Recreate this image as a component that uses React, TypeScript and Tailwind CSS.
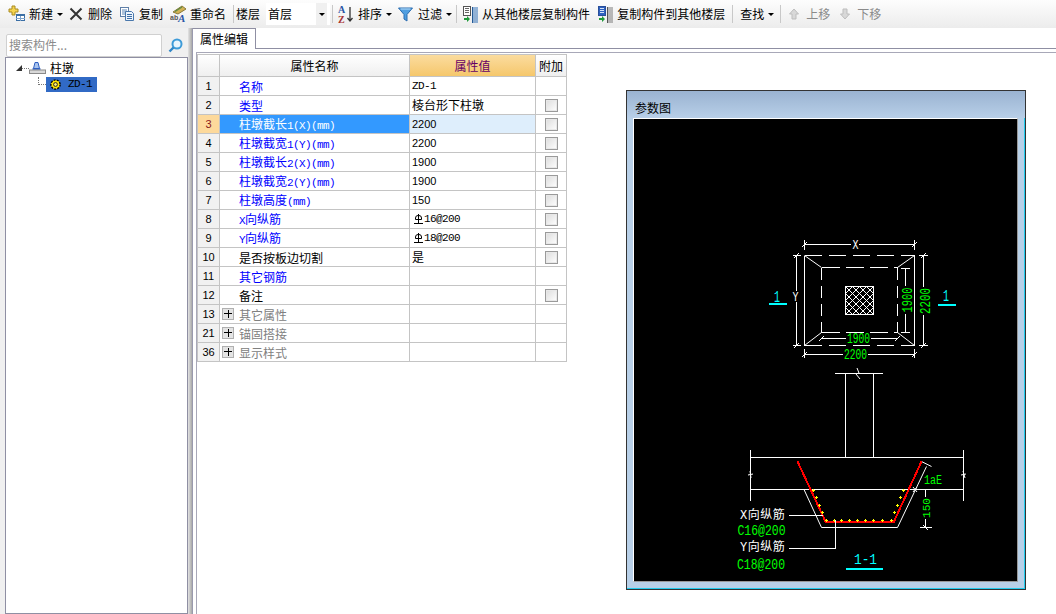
import React from "react";

const FONT = { fontFamily: '"Noto Sans CJK SC", "Liberation Sans", sans-serif' };

function Mixed({ text }: { text: string }) {
  const parts = text.split(/([\x20-\x7e]+)/).filter(Boolean);
  return (
    <>
      {parts.map((p, i) =>
        /^[\x20-\x7e]+$/.test(p) ? (
          <span key={i} className="font-['Liberation_Mono',monospace] text-[11px] tracking-[-0.6px]">{p}</span>
        ) : (
          <span key={i}>{p}</span>
        )
      )}
    </>
  );
}

function Caret() {
  return <span className="inline-block w-0 h-0 border-l-[3px] border-r-[3px] border-t-[3px] border-l-transparent border-r-transparent border-t-black" />;
}

function Sep() {
  return <span className="w-px h-[18px] bg-[#c8c8c8]" />;
}

const NewIcon = () => (
  <svg width="18" height="18" viewBox="0 0 18 18">
    <path d="M4 1h3v3h3v3H7v3H4V7H1V4h3z" fill="#f5d44f" stroke="#a88a20" />
    <rect x="8.5" y="9.5" width="8" height="6" fill="#fff" stroke="#3a6ea5" />
    <rect x="8" y="9" width="9" height="2" fill="#3a6ea5" />
    <path d="M12.5 11v5M8 13.5h9" stroke="#7fa4cc" />
  </svg>
);
const DelIcon = () => (
  <svg width="14" height="14" viewBox="0 0 14 14"><path d="M1.5 1.5l11 11M12.5 1.5l-11 11" stroke="#333" strokeWidth="2" /></svg>
);
const CopyIcon = () => (
  <svg width="16" height="16" viewBox="0 0 16 16">
    <rect x="1.5" y="1.5" width="8" height="9" fill="#fff" stroke="#5f7fa8" />
    <path d="M3 4h5M3 6h5M3 8h3" stroke="#5f88b8" />
    <path d="M6.5 5.5h6l2 2v7h-8z" fill="#eef5fc" stroke="#4a78ac" />
    <path d="M8 8.5h5M8 10.5h5M8 12.5h5" stroke="#3f6fa8" />
  </svg>
);
const RenameIcon = () => (
  <svg width="18" height="18" viewBox="0 0 18 18">
    <path d="M3 7L12 1l4 3-8 5z" fill="#d2b254" stroke="#8a7a3a" />
    <path d="M5 6.5l7-4.5" stroke="#5e8a45" strokeWidth="1.3" />
    <text x="0" y="15" fontSize="7" fontWeight="700" fontFamily="Liberation Sans" fill="#555">ab</text>
    <text x="8" y="17" fontSize="11" fontWeight="700" fontStyle="italic" fontFamily="Liberation Serif" fill="#2a55a5">A</text>
  </svg>
);
const SortIcon = () => (
  <svg width="17" height="20" viewBox="0 0 17 20">
    <text x="1" y="9" fontSize="10" fontWeight="700" fontFamily="Liberation Serif" fill="#2a55a5">A</text>
    <text x="1" y="19" fontSize="10" fontWeight="700" fontFamily="Liberation Serif" fill="#a83232">Z</text>
    <path d="M13 3v14M10.5 14l2.5 3 2.5-3" stroke="#333" strokeWidth="1.3" fill="none" />
  </svg>
);
const FilterIcon = () => (
  <svg width="15" height="15" viewBox="0 0 15 15">
    <path d="M0.5 1h14L9 7.5V14l-3-2V7.5z" fill="#4f9ee0" stroke="#2a6cb0" />
    <path d="M2.5 2h10" stroke="#bfe0fa" />
  </svg>
);
const CopyFloor = ({ flip }: { flip?: boolean }) => (
  <svg width="17" height="18" viewBox="0 0 17 18">
    <rect x="1.5" y="1.5" width="7" height="9" fill={flip ? "#2f62c0" : "#fff"} stroke={flip ? "#2a4f9a" : "#555"} />
    <path d="M3 3.5h4M3 5.5h4M3 7.5h4" stroke={flip ? "#d5e3f7" : "#666"} />
    <path d="M2 13h3v-2l3 3-3 3v-2H2z" fill="#1f9a3a" />
    <path d="M11 3h5M11 5h5M11 7h5M11 9h5M11 11h5M11 13h5M11 15h5M11 17h5" stroke={flip ? "#7a7a7a" : "#2f6fb5"} />
    <path d="M10.5 2v16" stroke={flip ? "#555" : "#245a96"} />
  </svg>
);
const Arrow = ({ down }: { down?: boolean }) => (
  <svg width="10" height="12" viewBox="0 0 10 12">
    <path d={down ? "M3 1h4v5h2.5L5 11 .5 6H3z" : "M5 1l4.5 5H7v5H3V6H.5z"} fill="#d8d8d8" stroke="#bdbdbd" />
  </svg>
);
const SearchIcon = () => (
  <svg width="15" height="15" viewBox="0 0 15 15">
    <circle cx="9" cy="6" r="4.5" fill="#eaf5fd" stroke="#3d9bd8" strokeWidth="2" />
    <path d="M5.5 9.5L1.5 13.5" stroke="#2f86c8" strokeWidth="2.4" />
  </svg>
);
const PierIcon = () => (
  <svg width="17" height="12" viewBox="0 0 17 12">
    <path d="M6 .5h3l1.5 6h-6z" fill="#a9c4ee" stroke="#2f5fc0" />
    <path d="M3.5 7h8" stroke="#2f5fc0" strokeWidth="1.5" />
    <rect x="0.5" y="8" width="16" height="3.5" fill="#d8d8d8" stroke="#8a8a8a" />
  </svg>
);
const ItemIcon = () => (
  <svg width="11" height="11" viewBox="0 0 11 11">
    <circle cx="5.5" cy="5.5" r="4.6" fill="#ffe600" stroke="#000" strokeWidth="1.4" strokeDasharray="2 1.2" />
    <circle cx="5.5" cy="5.5" r="1.9" fill="#fff27a" stroke="#222" strokeWidth="1" />
  </svg>
);

function Tool({ children, label, caret, gray, className }: { children?: React.ReactNode; label: string; caret?: boolean; gray?: boolean; className?: string }) {
  return (
    <span className={"flex items-center " + (className ?? "")}>
      {children}
      <span className={gray ? "text-[#8a8a8a]" : "text-black"}>{label}</span>
      {caret && <span className="ml-1 flex"><Caret /></span>}
    </span>
  );
}

type Row = { n: string; name: string; value?: string; kind?: "blue" | "black" | "group"; check?: boolean; sel?: boolean; serif?: boolean };

const rows: Row[] = [
  { n: "1", name: "名称", value: "ZD-1", kind: "blue", serif: true },
  { n: "2", name: "类型", value: "棱台形下柱墩", kind: "blue", check: true },
  { n: "3", name: "柱墩截长1(X)(mm)", value: "2200", kind: "blue", check: true, sel: true },
  { n: "4", name: "柱墩截宽1(Y)(mm)", value: "2200", kind: "blue", check: true },
  { n: "5", name: "柱墩截长2(X)(mm)", value: "1900", kind: "blue", check: true },
  { n: "6", name: "柱墩截宽2(Y)(mm)", value: "1900", kind: "blue", check: true },
  { n: "7", name: "柱墩高度(mm)", value: "150", kind: "blue", check: true },
  { n: "8", name: "X向纵筋", value: "⏀16@200", kind: "blue", check: true },
  { n: "9", name: "Y向纵筋", value: "⏀18@200", kind: "blue", check: true },
  { n: "10", name: "是否按板边切割", value: "是", kind: "black", check: true },
  { n: "11", name: "其它钢筋", kind: "blue" },
  { n: "12", name: "备注", kind: "black", check: true },
  { n: "13", name: "其它属性", kind: "group" },
  { n: "21", name: "锚固搭接", kind: "group" },
  { n: "36", name: "显示样式", kind: "group" },
];

function Check() {
  return <span className="block w-[13px] h-[13px] border border-[#9a9a9a] bg-gradient-to-br from-[#dcdcdc] to-[#ffffff] shadow-[inset_0_0_0_1px_#e8e8e8]" />;
}

function Plus() {
  return (
    <span className="relative block w-[12px] h-[12px] border border-[#b0b0b0] bg-[#e4e4e4]">
      <span className="absolute left-[1px] top-[4px] w-[8px] h-px bg-black" />
      <span className="absolute left-[5px] top-[1px] w-px h-[8px] bg-black" />
    </span>
  );
}

function RebarValue({ text }: { text: string }) {
  return (
    <span className="pl-[4px] flex items-center font-['Liberation_Mono',monospace] text-[11px] tracking-[-0.6px]">
      <span className="relative inline-block w-[9px] h-[10px] mr-[1px]">
        <span className="absolute left-[1px] top-[1px] w-[7px] h-[5px] border border-black rounded-t-[3px]" />
        <span className="absolute left-[4px] top-0 w-px h-[10px] bg-black" />
        <span className="absolute left-0 bottom-0 w-[9px] h-px bg-black" />
      </span>
      {text}
    </span>
  );
}

function PropRow({ r }: { r: Row }) {
  const nameColor = r.sel ? "text-white" : r.kind === "blue" ? "text-[#0000ff]" : r.kind === "group" ? "text-[#808080]" : "text-black";
  return (
    <div className="flex h-[19px] border-b border-l border-[#c4c4c4]">
      <div className={"w-[22px] border-r border-[#c4c4c4] flex items-center justify-center font-['Liberation_Sans',sans-serif] text-[11px] " + (r.sel ? "bg-[#fdd99b] text-[#8a1a1a]" : "bg-[#f1f1f1] text-black")}>
        {r.n}
      </div>
      <div className={"w-[190px] border-r border-[#c4c4c4] flex items-center " + (r.sel ? "bg-[#3399ff]" : "bg-white")}>
        {r.kind === "group" ? <span className="ml-[2px] mr-[5px]"><Plus /></span> : <span className="w-[19px]" />}
        <span className={"leading-none mt-[2px] " + nameColor}><Mixed text={r.name} /></span>
      </div>
      <div className={"w-[126px] border-r border-[#c4c4c4] flex items-center " + (r.sel ? "bg-[#deeefc]" : "bg-white")}>
        {r.value?.startsWith("⏀") ? (
          <RebarValue text={r.value.slice(1)} />
        ) : r.serif ? (
          <span className="pl-[2px] font-['Liberation_Mono',monospace] text-[11px] tracking-[-0.6px]">{r.value}</span>
        ) : /^\d+$/.test(r.value ?? "") ? (
          <span className="pl-[2px] font-['Liberation_Sans',sans-serif] text-[11px]">{r.value}</span>
        ) : (
          <span className="pl-[2px]">{r.value}</span>
        )}
      </div>
      <div className="w-[31px] border-r border-[#c4c4c4] bg-white flex items-center justify-center">
        {r.check && <Check />}
      </div>
    </div>
  );
}

function Drawing() {
  const W = { stroke: "#fff", strokeWidth: 1, fill: "none" };
  const mono = "Liberation Mono, monospace";
  const cjk = "Noto Sans CJK SC, sans-serif";
  const fit = { lengthAdjust: "spacingAndGlyphs" as const };
  const bottomX = [289, 313, 334, 358, 382, 406, 430, 457, 484];
  const sideL = [[277, 427], [268, 405], [259, 382], [250, 361]];
  const sideR = [[493, 427], [502, 405], [511, 382], [520, 361]];
  const pts: [number, number][] = [
    ...bottomX.map((x) => [730 + x / 3, 519.7] as [number, number]),
    ...[...sideL, ...sideR].map(([x, y]) => [730 + x / 3, 370 + y / 3] as [number, number]),
  ];
  const hatch: string[] = [];
  for (let i = -28; i <= 28; i += 7) {
    const a = Math.max(0, i);
    const b = Math.min(28, 28 + i);
    hatch.push(`M${845.5 + a} ${286.5 + a - i}L${845.5 + b} ${286.5 + b - i}`);
    hatch.push(`M${873.5 - a} ${286.5 + a - i}L${873.5 - b} ${286.5 + b - i}`);
  }
  const tick = (x: number, y: number, k: string) => <path key={k} d={`M${x - 2.5} ${y + 2.5}L${x + 2.5} ${y - 2.5}`} {...W} />;
  return (
    <svg className="block w-full h-full" viewBox="634 119 383 462" shapeRendering="crispEdges">
      {/* plan view */}
      <path d="M804.5 256V345.5M914.5 256V345.5" {...W} />
      <path d="M804.5 255.5H914.5M804.5 345.5H914.5" {...W} strokeDasharray="17 7" />
      <path d="M821.5 267.5H897.5M821.5 332.5H897.5" {...W} strokeDasharray="18 6" />
      <path d="M821.5 267.5V332.5M897.5 267.5V332.5" {...W} strokeDasharray="12 6" />
      <path d="M804.5 255.5L821.5 267.5M914.5 255.5L897.5 267.5M804.5 345.5L821.5 332.5M914.5 345.5L897.5 332.5" {...W} shapeRendering="auto" />
      <rect x="845.5" y="286.5" width="28" height="28" {...W} />
      <path d={hatch.join("")} {...W} shapeRendering="auto" />
      {/* dims */}
      <path d="M804.5 240V250M914.5 240V250M804.5 244.5H851M859 244.5H914.5" {...W} />
      {tick(804.5, 244.5, "a")}{tick(914.5, 244.5, "b")}
      <text x="855.5" y="249" textAnchor="middle" fontFamily={mono} fontSize="13" fill="#fff" textLength="6" {...fit}>X</text>
      <path d="M793 255.5H801M793 345.5H801M796.5 255.5V291M796.5 302V345.5" {...W} />
      {tick(796.5, 255.5, "c")}{tick(796.5, 345.5, "d")}
      <text x="795.5" y="301" textAnchor="middle" fontFamily={mono} fontSize="13" fill="#fff" textLength="6" {...fit}>Y</text>
      <path d="M919 255.5H928M919 345.5H928M923.5 255.5V287M923.5 315V345.5" {...W} />
      {tick(923.5, 255.5, "e")}{tick(923.5, 345.5, "f")}
      <path d="M901 268.5H910M901 332.5H910M905.5 268.5V286M905.5 314V332.5" {...W} />
      <text transform="translate(912 300) rotate(-90)" textAnchor="middle" fontFamily={mono} fontSize="14" fill="#00ff00" textLength="25" {...fit}>1900</text>
      <text transform="translate(930 301) rotate(-90)" textAnchor="middle" fontFamily={mono} fontSize="14" fill="#00ff00" textLength="26" {...fit}>2200</text>
      <path d="M821.5 338.5H846M871 338.5H897.5" {...W} />
      {tick(821.5, 338.5, "g")}{tick(897.5, 338.5, "h")}
      <text x="858.5" y="343" textAnchor="middle" fontFamily={mono} fontSize="14" fill="#00ff00" textLength="23" {...fit}>1900</text>
      <path d="M804.5 349V358M914.5 349V358M804.5 354.5H843M868 354.5H914.5" {...W} />
      {tick(804.5, 354.5, "i")}{tick(914.5, 354.5, "j")}
      <text x="855.5" y="358.5" textAnchor="middle" fontFamily={mono} fontSize="14" fill="#00ff00" textLength="23" {...fit}>2200</text>
      <text x="777" y="301.5" textAnchor="middle" fontFamily={mono} fontSize="16" fill="#00ffff" textLength="6" {...fit}>1</text>
      <rect x="769" y="303" width="18" height="2" fill="#00ffff" />
      <text x="946" y="301" textAnchor="middle" fontFamily={mono} fontSize="16" fill="#00ffff" textLength="6" {...fit}>1</text>
      <rect x="938" y="304" width="18" height="2" fill="#00ffff" />

      {/* section */}
      <path d="M835 373.5H882.5M845.5 373.5V457.5M873.5 373.5V457.5" {...W} />
      <path d="M857 368L859 373L856 374L860 379" {...W} shapeRendering="auto" />
      <path d="M751 457.5H963.5M751 489.5H963.5M750.5 450V501M963.5 450V501" {...W} />
      <path d="M748 475L753 474M750 471L751 478M961 475L966 474M963 471L965 478" {...W} shapeRendering="auto" />
      <path d="M804 489.5L821.5 527.5H897.5L926.5 466.5M921.5 461.5L931.5 466.5" {...W} shapeRendering="auto" />
      <path d="M797.5 461.5L825.5 521.5H894L921.5 461.5" fill="none" stroke="#ff0000" strokeWidth="2" />
      {pts.map(([x, y], i) => (
        <path key={i} d={`M${Math.round(x) - 1} ${Math.round(y) + 0.5}h3M${Math.round(x) + 0.5} ${Math.round(y) - 1}v3`} stroke="#ffff00" fill="none" />
      ))}
      <path d="M789 515.5H822.5M789 548.5H835.5V520" {...W} />
      <text x="740" y="519" fontFamily={cjk} fontSize="12" fill="#fff" letterSpacing="0.5"><tspan fontFamily={mono}>X</tspan>向纵筋</text>
      <text x="737.5" y="535" fontFamily={mono} fontSize="14" fill="#00ff00" textLength="48" {...fit}>C16@200</text>
      <text x="740" y="551" fontFamily={cjk} fontSize="12" fill="#fff" letterSpacing="0.5"><tspan fontFamily={mono}>Y</tspan>向纵筋</text>
      <text x="737" y="569" fontFamily={mono} fontSize="14" fill="#00ff00" textLength="48" {...fit}>C18@200</text>
      <text x="865.5" y="564" textAnchor="middle" fontFamily={mono} fontSize="15" fill="#00ffff" textLength="23" {...fit}>1-1</text>
      <rect x="846" y="568" width="37" height="2" fill="#00ffff" />
      <text x="924" y="484" fontFamily={mono} fontSize="12" fill="#00ff00" textLength="18" {...fit}>1aE</text>
      <path d="M910 489.5H927M925.5 489.5V497M925.5 519V527.5M919.5 527.5H931.5" {...W} />
      <path d="M913 487L917 492M917 487L913 492M923 525L928 530" {...W} shapeRendering="auto" />
      <text transform="translate(929.5 508) rotate(-90)" textAnchor="middle" fontFamily={mono} fontSize="11" fill="#00ff00" textLength="20" {...fit}>150</text>
    </svg>
  );
}

export default function App() {
  return (
    <div className="w-[1056px] h-[614px] overflow-hidden bg-white flex flex-col text-[12px] text-black" style={FONT}>
      {/* Toolbar */}
      <div className="h-[28px] shrink-0 flex items-center bg-gradient-to-b from-[#fdfdfd] to-[#ececec] pl-[8px] text-[12px]">
        <Tool label="新建" caret><span className="mr-[3px]"><NewIcon /></span></Tool>
        <Tool label="删除" className="ml-[6px]"><span className="mr-[5px]"><DelIcon /></span></Tool>
        <Tool label="复制" className="ml-[7px]"><span className="mr-[4px]"><CopyIcon /></span></Tool>
        <Tool label="重命名" className="ml-[7px]"><span className="mr-[2px]"><RenameIcon /></span></Tool>
        <span className="ml-[7px] mr-[2px] flex"><Sep /></span>
        <span>楼层</span>
        <span className="ml-[6px] w-[64px] h-[22px] bg-white flex items-center justify-between pl-[2px]">
          <span>首层</span>
          <span className="h-full w-[11px] mr-[3px] bg-[#f0f0f0] flex items-center justify-center"><Caret /></span>
        </span>
        <span className="ml-[2px] flex"><Sep /></span>
        <span className="ml-[4px] mr-[4px] flex"><SortIcon /></span>
        <Tool label="排序" caret />
        <span className="ml-[6px] mr-[5px] flex"><FilterIcon /></span>
        <Tool label="过滤" caret />
        <span className="ml-[4px] flex"><Sep /></span>
        <Tool label="从其他楼层复制构件" className="ml-[5px]"><span className="mr-[3px]"><CopyFloor /></span></Tool>
        <Tool label="复制构件到其他楼层" className="ml-[7px]"><span className="mr-[3px]"><CopyFloor flip /></span></Tool>
        <span className="ml-[7px] flex"><Sep /></span>
        <Tool label="查找" caret className="ml-[7px]" />
        <span className="ml-[6px] flex"><Sep /></span>
        <Tool label="上移" gray className="ml-[8px]"><span className="mr-[7px] flex"><Arrow /></span></Tool>
        <Tool label="下移" gray className="ml-[10px]"><span className="mr-[7px] flex"><Arrow down /></span></Tool>
      </div>

      <div className="flex-1 flex min-h-0">
        {/* Left panel */}
        <div className="w-[188px] shrink-0 bg-[#f0f0f0] flex flex-col pl-[5px] pt-[5px]">
          <div className="flex items-center h-[24px] shrink-0">
            <div className="ml-[1px] w-[156px] h-[23px] bg-white border border-[#d0d0d0] rounded-[2px] flex items-center pl-[2px] text-[#8a8a8a]">搜索构件...</div>
            <span className="ml-[6px] flex"><SearchIcon /></span>
          </div>
          <div className="flex-1 bg-white border border-[#8f8fa3] pt-[2px]">
            <div className="flex items-center h-[16px] pl-[10px]">
              <span className="w-0 h-0 border-b-[6px] border-l-[6px] border-b-[#333] border-l-transparent" />
              <span className="w-[7px] border-t border-dotted border-[#777]" />
              <PierIcon />
              <span className="ml-[4px]">柱墩</span>
            </div>
            <div className="flex items-center h-[15px] mt-[1px] pl-[32px]">
              <span className="w-[8px] h-[8px] -mt-[8px] border-l border-b border-dotted border-[#777]" />
              <span className="w-[51px] h-[15px] bg-[#316ac5] flex items-center pl-[4px]">
                <ItemIcon />
                <span className="ml-[7px] font-['Liberation_Mono',monospace] text-[11px] tracking-[-0.6px] text-black">ZD-1</span>
              </span>
            </div>
          </div>
        </div>

        {/* Splitter */}
        <div className="w-[4px] shrink-0 bg-gradient-to-r from-[#e4e4e4] to-[#a8a8a8]" />

        {/* Right */}
        <div className="flex-1 min-w-0 flex flex-col border-l border-[#9a9aae]">
          <div className="h-[21px] shrink-0 flex items-start bg-white">
            <div className="w-[63px] h-[21px] border-t border-r border-[#8f8fa3] bg-white relative z-10 flex items-center pl-[7px]">属性编辑</div>
            <div className="flex-1 h-[21px] border-b border-[#8f8fa3]" />
          </div>
          <div className="flex-1 min-h-0 flex ml-[3px] border-l border-t border-[#a8a8b8] mt-[3px]">
            <div className="w-[370px] shrink-0 pt-[1px]">
              <div className="flex h-[23px] border border-[#c4c4c4] border-r-0">
                <div className="w-[22px] border-r border-[#c4c4c4] bg-gradient-to-b from-[#ffffff] to-[#efefef]" />
                <div className="w-[190px] border-r border-[#c4c4c4] bg-gradient-to-b from-[#ffffff] to-[#efefef] flex items-center justify-center">属性名称</div>
                <div className="w-[126px] border-r border-[#c4c4c4] bg-gradient-to-b from-[#fbdc9e] to-[#f5c76b] flex items-center justify-center text-[#660066]">属性值</div>
                <div className="w-[31px] border-r border-[#c4c4c4] bg-gradient-to-b from-[#ffffff] to-[#efefef] flex items-center justify-center">附加</div>
              </div>
              {rows.map((r) => <PropRow key={r.n} r={r} />)}
            </div>
            {/* Param panel */}
            <div className="ml-[59px] pt-[37px]">
              <div className="w-[400px] h-[500px] border border-[#333] bg-[#b8d0e8] flex flex-col shadow-[inset_-1px_-1px_0_#22ccee]">
                <div className="h-[27px] shrink-0 flex items-center pl-[8px] pt-[6px] text-black bg-gradient-to-b from-[#9ab3d1] to-[#b8cfe8]">参数图</div>
                <div className="ml-[6px] w-[385px] h-[464px] bg-black border-t border-l border-white border-r border-b border-r-[#999] border-b-[#999]">
                  <Drawing />
                </div>
              </div>
            </div>
          </div>
        </div>
      </div>
    </div>
  );
}
